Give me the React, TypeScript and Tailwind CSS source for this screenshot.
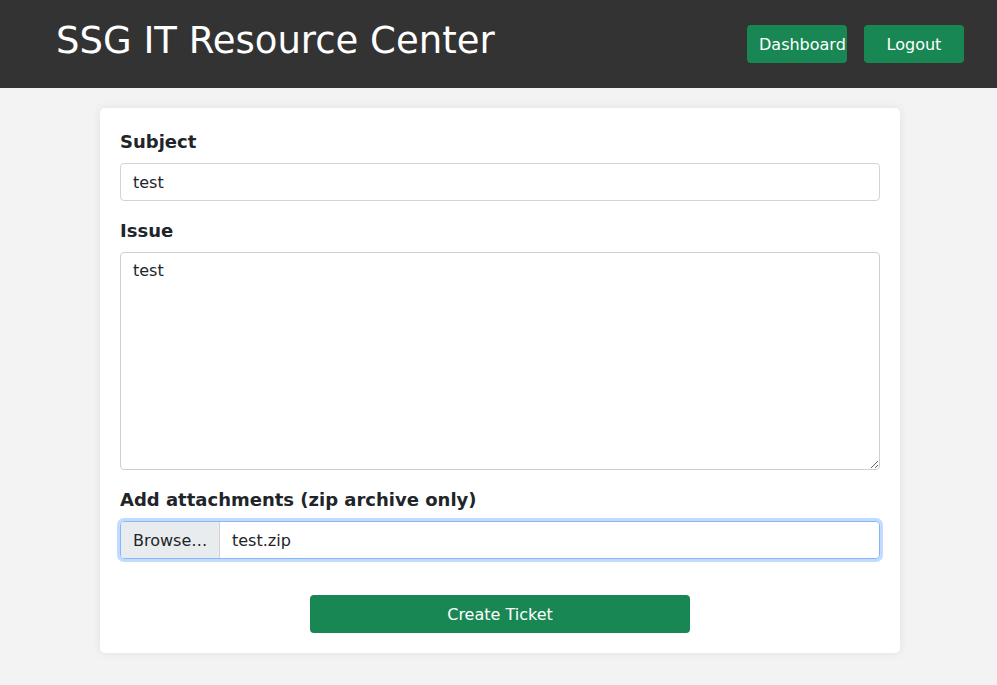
import React from "react";

export default function App() {
  return (
    <div
      className="min-h-[685px] bg-[#f3f3f3] text-[#212529]"
      style={{ fontFamily: '"DejaVu Sans", "Liberation Sans", sans-serif' }}
    >
      <header className="flex h-[88px] items-start justify-between bg-[#333333] pl-[56px] pr-[33px]">
        <h1 className="pt-[17px] text-[37px] font-normal leading-[48px] text-white">
          SSG IT Resource Center
        </h1>
        <div className="flex gap-[17px] self-center">
          <button className="block h-[38px] w-[100px] overflow-visible whitespace-nowrap rounded-[4px] bg-[#198754] px-[12px] pt-[1px] text-center text-[16px] leading-[24px] text-white">
            Dashboard
          </button>
          <button className="block h-[38px] w-[100px] whitespace-nowrap rounded-[4px] bg-[#198754] px-[12px] pt-[1px] text-center text-[16px] leading-[24px] text-white">
            Logout
          </button>
        </div>
      </header>

      <main className="pt-[20px] pb-[32px]">
        <form className="ml-[100px] w-[800px] rounded-[5px] bg-white p-[20px] shadow-[0_0_10px_rgba(0,0,0,0.08)]">
          <div className="mb-[16px]">
            <label className="mb-[8px] block text-[18px] font-bold leading-[27px]">Subject</label>
            <input
              readOnly
              value="test"
              className="block h-[38px] w-full rounded-[4px] border border-[#ced4da] bg-white px-[12px] text-[16px] leading-[24px] text-[#212529] outline-none"
            />
          </div>
          <div className="mb-[16px]">
            <label className="mb-[8px] block text-[18px] font-bold leading-[27px]">Issue</label>
            <textarea
              readOnly
              defaultValue="test"
              className="block h-[218px] w-full resize-y rounded-[4px] border border-[#cfcfcf] bg-white px-[12px] py-[6px] text-[16px] leading-[24px] text-[#212529] outline-none"
            />
          </div>
          <div className="mb-[36px]">
            <label className="mb-[8px] block text-[18px] font-bold leading-[27px]">
              Add attachments (zip archive only)
            </label>
            <div className="flex h-[38px] w-full overflow-hidden rounded-[4px] border border-[#86b7fe] shadow-[0_0_0_3px_rgba(13,110,253,0.25)]">
              <div className="flex w-[99px] items-center border-r border-[#ced4da] bg-[#e9ecef] px-[12px] pt-[1px] text-[16px] text-[#212529]">
                Browse…
              </div>
              <div className="flex items-center bg-white px-[12px] pt-[1px] text-[16px] text-[#212529]">test.zip</div>
            </div>
          </div>
          <div className="flex justify-center">
            <button
              type="button"
              className="h-[38px] w-[380px] rounded-[4px] bg-[#198754] pt-[1px] text-[16px] leading-[24px] text-white"
            >
              Create Ticket
            </button>
          </div>
        </form>
      </main>
    </div>
  );
}
